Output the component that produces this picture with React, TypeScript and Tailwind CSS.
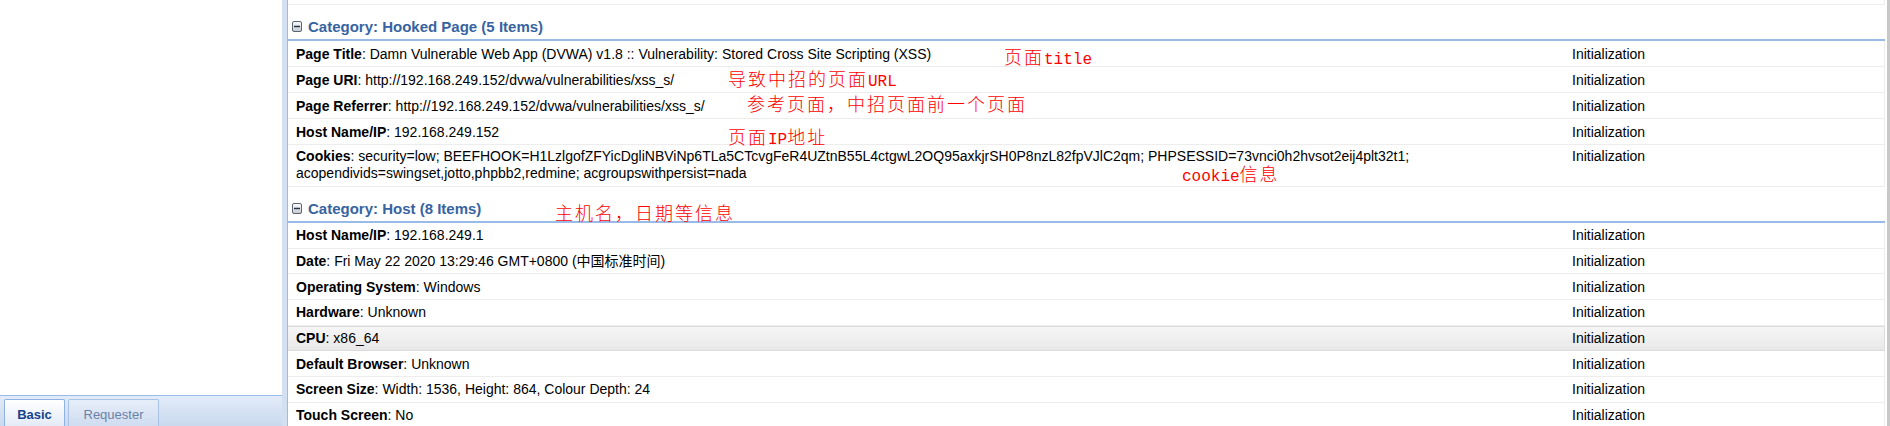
import React from "react";

type Row = { k: string; v: React.ReactNode; hi?: boolean; tall?: boolean };

const hooked: Row[] = [
  { k: "Page Title", v: "Damn Vulnerable Web App (DVWA) v1.8 :: Vulnerability: Stored Cross Site Scripting (XSS)" },
  { k: "Page URI", v: "http://192.168.249.152/dvwa/vulnerabilities/xss_s/" },
  { k: "Page Referrer", v: "http://192.168.249.152/dvwa/vulnerabilities/xss_s/" },
  { k: "Host Name/IP", v: "192.168.249.152" },
  {
    k: "Cookies",
    tall: true,
    v: (
      <>
        security=low; BEEFHOOK=H1LzlgofZFYicDgliNBViNp6TLa5CTcvgFeR4UZtnB55L4ctgwL2OQ95axkjrSH0P8nzL82fpVJlC2qm; PHPSESSID=73vnci0h2hvsot2eij4plt32t1;
        <br />
        acopendivids=swingset,jotto,phpbb2,redmine; acgroupswithpersist=nada
      </>
    ),
  },
];

const host: Row[] = [
  { k: "Host Name/IP", v: "192.168.249.1" },
  { k: "Date", v: "Fri May 22 2020 13:29:46 GMT+0800 (中国标准时间)" },
  { k: "Operating System", v: "Windows" },
  { k: "Hardware", v: "Unknown" },
  { k: "CPU", v: "x86_64", hi: true },
  { k: "Default Browser", v: "Unknown" },
  { k: "Screen Size", v: "Width: 1536, Height: 864, Colour Depth: 24" },
  { k: "Touch Screen", v: "No" },
];

function MinusIcon() {
  return (
    <svg width="10" height="11" viewBox="0 0 10 11" className="mb-[2px] shrink-0">
      <defs>
        <linearGradient id="mgrad" x1="0" y1="0" x2="0" y2="1">
          <stop offset="0" stopColor="#ffffff" />
          <stop offset="1" stopColor="#c3c9d2" />
        </linearGradient>
      </defs>
      <rect x="0.5" y="0.5" width="9" height="10" rx="1.5" fill="url(#mgrad)" stroke="#596474" />
      <rect x="2" y="4.75" width="6" height="1.5" fill="#2b3441" />
    </svg>
  );
}

function GroupHeader({ title }: { title: string }) {
  return (
    <div className="flex h-[36px] shrink-0 items-end border-b-2 border-[#99bbe8] pb-[3px] pl-[4px]">
      <div className="flex items-center gap-[6px]">
        <MinusIcon />
        <span className="text-[15px] font-bold leading-[18px] text-[#3764a0]">{title}</span>
      </div>
    </div>
  );
}

function DataRow({ row, h }: { row: Row; h: string }) {
  if (row.tall) {
    return (
      <div className="flex h-[42px] shrink-0 border-b border-r border-[#ededed] pt-[3px] leading-[17px]">
        <div className="flex-1 pl-[8px]">
          <b>{row.k}</b>: {row.v}
        </div>
        <div className="w-[317px] shrink-0 pl-[5px]">Initialization</div>
      </div>
    );
  }
  const base = row.hi
    ? "border-b border-r border-t border-[#dcdcdc] bg-gradient-to-b from-[#f6f6f6] to-[#e8e8e8]"
    : "border-b border-r border-[#ededed]";
  return (
    <div className={`flex shrink-0 items-center ${h} ${base}`}>
      <div className="flex-1 whitespace-nowrap pl-[8px]">
        <b>{row.k}</b>: {row.v}
      </div>
      <div className="w-[317px] shrink-0 pl-[5px]">Initialization</div>
    </div>
  );
}

const cjk = "font-['Noto_Sans_CJK_SC',sans-serif] text-[18px] tracking-[2px] font-light";
const lat = "font-['Liberation_Mono',monospace] text-[16px]";

export default function App() {
  return (
    <div className="relative flex h-[426px] w-[1890px] overflow-hidden bg-white font-['Liberation_Sans','Noto_Sans_CJK_SC',sans-serif] text-black">
      {/* left panel */}
      <div className="flex w-[282px] shrink-0 flex-col">
        <div className="flex-1 bg-white" />
        <div className="flex h-[31px] shrink-0 items-end gap-[3px] border-t border-[#99bbe8] bg-gradient-to-b from-[#e2ebf8] to-[#cad9ef] pl-[4px] pt-[3px]">
          <div className="flex h-full w-[61px] items-center justify-center rounded-t-[2px] border-x border-t border-[#8db2e3] bg-gradient-to-b from-white to-[#e3ebf7] pt-[4px] text-[13px] font-bold text-[#15428b]">
            Basic
          </div>
          <div className="flex h-full w-[91px] items-center justify-center rounded-t-[2px] border-x border-t border-[#a9c3e6] bg-gradient-to-b from-[#e6eef9] to-[#cfdcf0] pt-[4px] text-[13px] text-[#6a82a8]">
            Requester
          </div>
        </div>
      </div>

      {/* splitter */}
      <div className="w-[5px] shrink-0 bg-[#d3e0f1]" />

      {/* grid panel */}
      <div className="flex flex-1 border-l border-[#99bbe8]">
        <div className="flex flex-1 flex-col text-[14px] leading-[16px]">
          <div className="h-[5px] shrink-0 border-b border-r border-[#ededed]" />
          <GroupHeader title="Category: Hooked Page (5 Items)" />
          {hooked.map((r, i) => (
            <DataRow key={i} row={r} h="h-[26px]" />
          ))}
          <GroupHeader title="Category: Host (8 Items)" />
          {host.map((r, i) => (
            <DataRow key={i} row={r} h="h-[25.67px]" />
          ))}
        </div>
        <div className="w-[2px] shrink-0" />
        <div className="w-[3px] shrink-0 bg-[#c8c8c8]" />
      </div>

      {/* red annotations */}
      <span className="absolute left-[1004px] top-[46px] whitespace-nowrap leading-[20px] text-[#ff0000]">
        <span className={cjk}>页面</span>
        <span className={lat}>title</span>
      </span>
      <span className="absolute left-[728px] top-[68px] whitespace-nowrap leading-[20px] text-[#ff0000]">
        <span className={cjk}>导致中招的页面</span>
        <span className={lat}>URL</span>
      </span>
      <span className="absolute left-[747px] top-[93px] whitespace-nowrap leading-[20px] text-[#ff0000]">
        <span className={cjk}>参考页面，中招页面前一个页面</span>
      </span>
      <span className="absolute left-[728px] top-[126px] whitespace-nowrap leading-[20px] text-[#ff0000]">
        <span className={cjk}>页面</span>
        <span className={lat}>IP</span>
        <span className={cjk}>地址</span>
      </span>
      <span className="absolute left-[1182px] top-[163px] whitespace-nowrap leading-[20px] text-[#ff0000]">
        <span className={lat}>cookie</span>
        <span className={cjk}>信息</span>
      </span>
      <span className="absolute left-[555px] top-[202px] whitespace-nowrap leading-[20px] text-[#ff0000]">
        <span className={cjk}>主机名，日期等信息</span>
      </span>
    </div>
  );
}
